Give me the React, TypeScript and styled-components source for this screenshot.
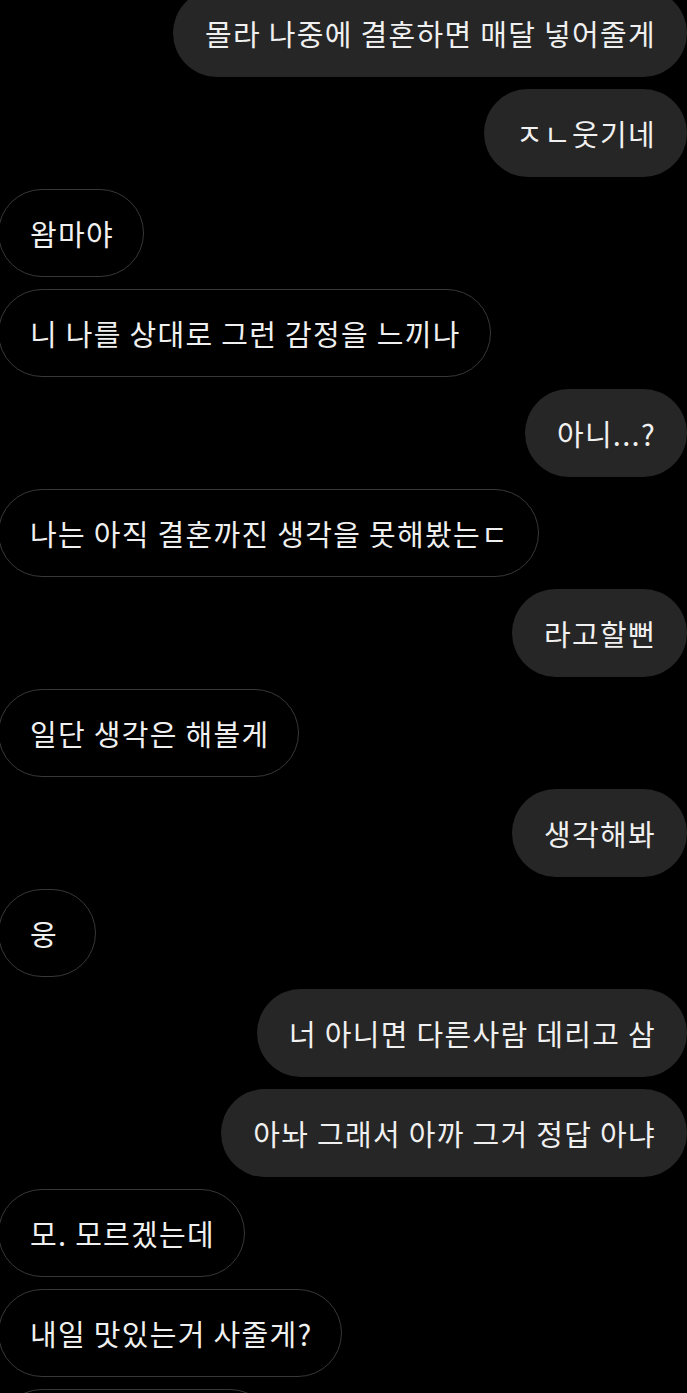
import React from "react";
import styled, { createGlobalStyle } from "styled-components";

const GlobalStyle = createGlobalStyle`
  html, body {
    margin: 0;
    padding: 0;
    background: #000;
    overflow: hidden;
  }
  body {
    font-family: "Noto Sans CJK KR", "Noto Sans", sans-serif;
  }
`;

type Msg = { me: boolean; text: string };

const messages: Msg[] = [
  { me: true, text: "몰라 나중에 결혼하면 매달 넣어줄게" },
  { me: true, text: "ㅈㄴ웃기네" },
  { me: false, text: "왐마야" },
  { me: false, text: "니 나를 상대로 그런 감정을 느끼나" },
  { me: true, text: "아니...?" },
  { me: false, text: "나는 아직 결혼까진 생각을 못해봤는ㄷ" },
  { me: true, text: "라고할뻔" },
  { me: false, text: "일단 생각은 해볼게" },
  { me: true, text: "생각해봐" },
  { me: false, text: "웅" },
  { me: true, text: "너 아니면 다른사람 데리고 삼" },
  { me: true, text: "아놔 그래서 아까 그거 정답 아냐" },
  { me: false, text: "모. 모르겠는데" },
  { me: false, text: "내일 맛있는거 사줄게?" },
];

export default function App() {
  return (
    <>
      <GlobalStyle />
      <Screen>
        <Thread>
          {messages.map((m, i) => (
            <Bubble key={i} $me={m.me}>
              {m.text}
            </Bubble>
          ))}
          {/* next message, only its top edge is on screen */}
          <Bubble $me={false} style={{ width: 276 }} />
        </Thread>
      </Screen>
    </>
  );
}

const Screen = styled.div`
  width: 687px;
  height: 1393px;
  overflow: hidden;
  background: #000;
`;

const Thread = styled.div`
  display: flex;
  flex-direction: column;
  gap: 12px;
  margin-top: -11px;
`;

const Bubble = styled.div<{ $me: boolean }>`
  box-sizing: border-box;
  flex-shrink: 0;
  height: 88px;
  min-width: 98px;
  display: flex;
  align-items: center;
  justify-content: ${(p) => (p.$me ? "flex-end" : "flex-start")};
  padding: 0 ${(p) => (p.$me ? "31px 0 32px" : "29px 0 31px")};
  border-radius: 44px;
  white-space: nowrap;
  font-size: 29px;
  letter-spacing: 1.3px;
  color: #f0f0f0;
  align-self: ${(p) => (p.$me ? "flex-end" : "flex-start")};
  background: ${(p) => (p.$me ? "#262626" : "#000")};
  border: ${(p) => (p.$me ? "none" : "1.5px solid #383838")};
  margin-left: ${(p) => (p.$me ? "0" : "-2px")};
`;
